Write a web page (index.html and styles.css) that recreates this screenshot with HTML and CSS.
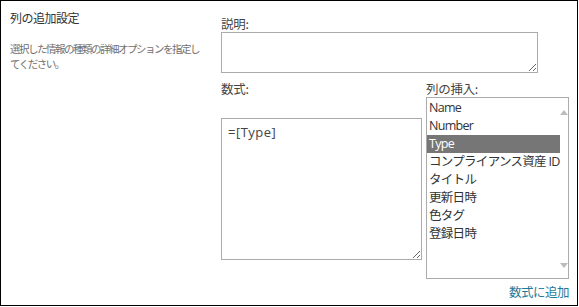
FILE: index.html
```html
<!DOCTYPE html>
<html lang="ja">
<head>
    <meta charset="UTF-8">
    <title>列の追加設定</title>
    <link rel="stylesheet" href="styles.css">
</head>
<body>
    <div class="panel">
        <div class="side">
            <h2 class="side-title">列の追加設定</h2>
            <p class="side-desc">選択した情報の種類の詳細オプションを指定してください。</p>
        </div>
        <div class="main">
            <label class="field-label" for="descText">説明:</label>
            <textarea id="descText" class="desc-box"></textarea>
            <div class="formula-row">
                <div class="formula-col">
                    <label class="field-label" for="formulaText">数式:</label>
                    <textarea id="formulaText" class="formula-box">=[Type]</textarea>
                </div>
                <div class="insert-col">
                    <div class="field-label">列の挿入:</div>
                    <div class="listbox">
                        <ul class="list-items">
                            <li>Name</li>
                            <li>Number</li>
                            <li class="selected">Type</li>
                            <li>コンプライアンス資産&nbsp;ID</li>
                            <li>タイトル</li>
                            <li>更新日時</li>
                            <li>色タグ</li>
                            <li>登録日時</li>
                        </ul>
                        <div class="scrollbar">
                            <span class="arrow-up"></span>
                            <span class="arrow-down"></span>
                        </div>
                    </div>
                    <a href="#" class="add-link">数式に追加</a>
                </div>
            </div>
        </div>
    </div>
</body>
</html>
```

FILE: styles.css
```css
body {
    margin: 0;
    padding: 0;
    background-color: #fff;
    font-family: "Open Sans", "Noto Sans CJK JP", sans-serif;
    color: #333;
}
.panel {
    box-sizing: border-box;
    width: 578px;
    height: 306px;
    border: 1px solid #000;
    display: flex;
}
.side {
    width: 210px;
    padding: 8px 0 0 9px;
    box-sizing: border-box;
}
.side-title {
    margin: 0;
    font-size: 12px;
    font-weight: normal;
    line-height: 17px;
    letter-spacing: -0.5px;
    color: #333;
    font-family: "Noto Sans CJK JP", sans-serif;
}
.side-desc {
    margin: 15px 0 0 0;
    font-size: 10.5px;
    line-height: 15px;
    letter-spacing: -1.5px;
    color: #707070;
    width: 196px;
    font-family: "Noto Sans CJK JP", sans-serif;
}
.main {
    padding: 14px 0 0 10px;
}
.field-label {
    display: block;
    font-size: 12.5px;
    line-height: 17px;
    height: 17px;
    color: #444;
    font-family: "Noto Sans CJK JP", sans-serif;
    letter-spacing: -0.3px;
}
textarea {
    display: block;
    box-sizing: border-box;
    border: 1px solid #ababab;
    margin: 0;
    font-family: "Open Sans", "Noto Sans CJK JP", sans-serif;
    color: #444;
    background: #fff;
    outline: none;
}
.desc-box {
    width: 317px;
    height: 41px;
    resize: both;
}
.formula-row {
    display: flex;
    gap: 4px;
    margin-top: 7px;
}
.formula-col {
    width: 201px;
}
.formula-box {
    width: 201px;
    height: 142px;
    margin-top: 21px;
    padding: 5px 6px;
    font-size: 13px;
    line-height: 17px;
    letter-spacing: 0.5px;
}
.insert-col {
    width: 143px;
}
.listbox {
    box-sizing: border-box;
    width: 143px;
    height: 182px;
    border: 1px solid #ababab;
    display: flex;
}
.list-items {
    list-style: none;
    margin: 0;
    padding: 1px 0 0 0;
    flex: 1;
}
.list-items li {
    height: 18px;
    line-height: 18px;
    padding-left: 2px;
    font-size: 12.5px;
    color: #333;
    white-space: nowrap;
    letter-spacing: -0.7px;
}
.list-items li.selected {
    background-color: #767676;
    color: #fff;
}
.scrollbar {
    width: 15px;
    display: flex;
    flex-direction: column;
    justify-content: space-between;
    align-items: center;
    padding: 12px 0 10px 0;
}
.arrow-up, .arrow-down {
    width: 0;
    height: 0;
    border-left: 4.5px solid transparent;
    border-right: 4.5px solid transparent;
}
.arrow-up {
    border-bottom: 5px solid #bcbcbc;
}
.arrow-down {
    border-top: 5px solid #bcbcbc;
}
.add-link {
    display: block;
    text-align: right;
    margin-top: 4px;
    font-size: 12.5px;
    line-height: 17px;
    color: #1f7a99;
    text-decoration: none;
    font-family: "Noto Sans CJK JP", sans-serif;
    letter-spacing: -0.5px;
}
```
